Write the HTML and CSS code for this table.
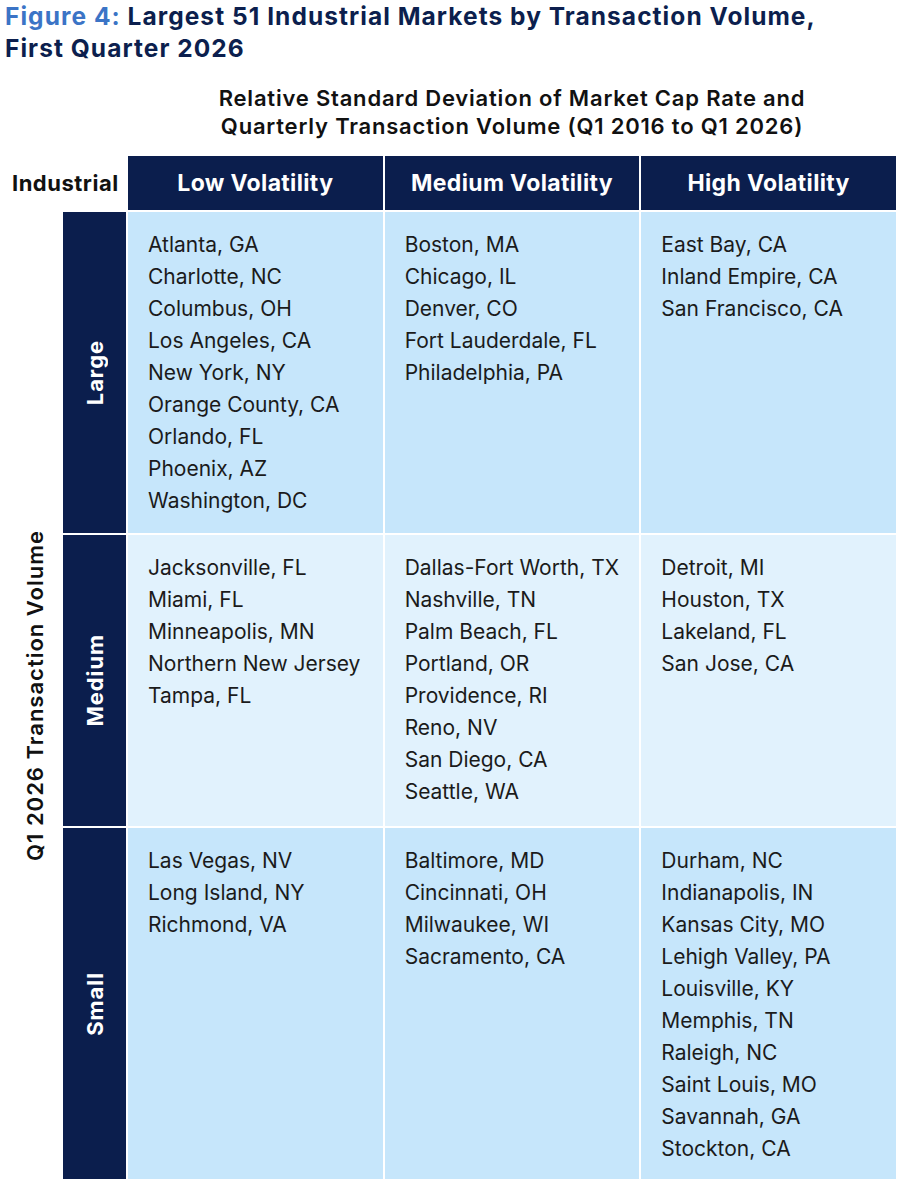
FILE: index.html
```html
<!DOCTYPE html>
<html lang="en">
<head>
<meta charset="utf-8">
<title>Figure 4</title>
<link rel="stylesheet" href="styles.css">
</head>
<body>
<div class="page">
  <h1 class="title"><span class="fig">Figure 4:</span> Largest 51 Industrial Markets by Transaction Volume,<br>First Quarter 2026</h1>
  <div class="subtitle-row">
    <div class="subtitle">Relative Standard Deviation of Market Cap Rate and<br>Quarterly Transaction Volume (Q1 2016 to Q1 2026)</div>
  </div>
  <div class="grid">
    <div class="corner">Industrial</div>
    <div class="colhead">Low Volatility</div>
    <div class="colhead">Medium Volatility</div>
    <div class="colhead">High Volatility</div>

    <div class="axis"><span>Q1 2026 Transaction Volume</span></div>

    <div class="rowhead"><span>Large</span></div>
    <div class="cell dark">
      <div>Atlanta, GA</div><div>Charlotte, NC</div><div>Columbus, OH</div><div>Los Angeles, CA</div><div>New York, NY</div><div>Orange County, CA</div><div>Orlando, FL</div><div>Phoenix, AZ</div><div>Washington, DC</div>
    </div>
    <div class="cell dark">
      <div>Boston, MA</div><div>Chicago, IL</div><div>Denver, CO</div><div>Fort Lauderdale, FL</div><div>Philadelphia, PA</div>
    </div>
    <div class="cell dark">
      <div>East Bay, CA</div><div>Inland Empire, CA</div><div>San Francisco, CA</div>
    </div>

    <div class="rowhead"><span>Medium</span></div>
    <div class="cell light">
      <div>Jacksonville, FL</div><div>Miami, FL</div><div>Minneapolis, MN</div><div>Northern New Jersey</div><div>Tampa, FL</div>
    </div>
    <div class="cell light">
      <div>Dallas-Fort Worth, TX</div><div>Nashville, TN</div><div>Palm Beach, FL</div><div>Portland, OR</div><div>Providence, RI</div><div>Reno, NV</div><div>San Diego, CA</div><div>Seattle, WA</div>
    </div>
    <div class="cell light">
      <div>Detroit, MI</div><div>Houston, TX</div><div>Lakeland, FL</div><div>San Jose, CA</div>
    </div>

    <div class="rowhead"><span>Small</span></div>
    <div class="cell dark last">
      <div>Las Vegas, NV</div><div>Long Island, NY</div><div>Richmond, VA</div>
    </div>
    <div class="cell dark last">
      <div>Baltimore, MD</div><div>Cincinnati, OH</div><div>Milwaukee, WI</div><div>Sacramento, CA</div>
    </div>
    <div class="cell dark last">
      <div>Durham, NC</div><div>Indianapolis, IN</div><div>Kansas City, MO</div><div>Lehigh Valley, PA</div><div>Louisville, KY</div><div>Memphis, TN</div><div>Raleigh, NC</div><div>Saint Louis, MO</div><div>Savannah, GA</div><div>Stockton, CA</div>
    </div>
  </div>
</div>
</body>
</html>
```

FILE: styles.css
```css
* { box-sizing: border-box; }
html, body { margin: 0; padding: 0; background: #ffffff; }
body { font-family: Inter, "Noto Sans", "Liberation Sans", sans-serif; color: #1b1b1b; }

.page { width: 900px; padding: 0 4px 0 0; }

.title {
  margin: 0;
  padding: 0 0 0 5px;
  font-size: 24.5px;
  line-height: 32px;
  font-weight: 700;
  letter-spacing: 1.05px;
  color: #0c1f4e;
}
.title .fig { color: #3b74c6; }

.subtitle-row {
  display: grid;
  grid-template-columns: 126px 1fr;
  column-gap: 2px;
  padding-top: 20px;
  padding-bottom: 16px;
}
.subtitle {
  grid-column: 2;
  text-align: center;
  font-size: 22px;
  line-height: 28px;
  font-weight: 600;
  letter-spacing: 0.8px;
  color: #111111;
}

.grid {
  display: grid;
  grid-template-columns: 61px 63px 1fr 1fr 1fr;
  grid-template-rows: 54px auto auto auto;
  gap: 2px;
}

.corner {
  grid-column: 1 / 3;
  display: flex;
  align-items: center;
  padding-left: 12px;
  font-size: 22px;
  font-weight: 700;
  letter-spacing: 0.5px;
  color: #111111;
}

.colhead {
  background: #0b1e4d;
  color: #ffffff;
  display: flex;
  align-items: center;
  justify-content: center;
  font-size: 23px;
  font-weight: 700;
  letter-spacing: 0.35px;
}

.axis {
  grid-column: 1;
  grid-row: 2 / 5;
  display: flex;
  align-items: center;
  justify-content: center;
  padding-left: 9px;
}
.axis span {
  writing-mode: vertical-rl;
  transform: rotate(180deg);
  font-size: 22px;
  font-weight: 600;
  letter-spacing: 1px;
  color: #111111;
  white-space: nowrap;
}

.rowhead {
  grid-column: 2;
  background: #0b1e4d;
  display: flex;
  align-items: center;
  justify-content: center;
}
.rowhead span {
  writing-mode: vertical-rl;
  transform: rotate(180deg);
  color: #ffffff;
  font-size: 22px;
  font-weight: 700;
  letter-spacing: 0.9px;
  white-space: nowrap;
}

.cell {
  padding: 17px 8px 16px 20px;
  font-size: 21px;
  line-height: 32px;
  color: #1b1b1b;
}
.cell.dark { background: #c6e6fb; }
.cell.light { background: #e1f2fd; padding-bottom: 18px; }
.cell.last { padding-bottom: 14px; }
```
